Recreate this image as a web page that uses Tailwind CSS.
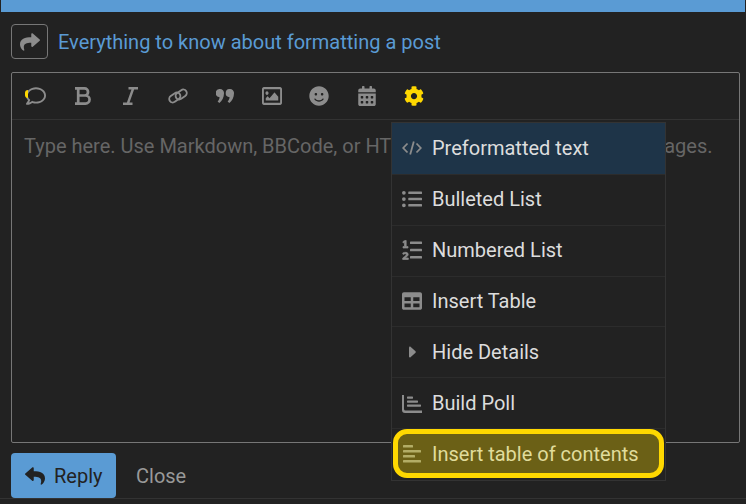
<!DOCTYPE html>
<html lang="en">
<head>
    <meta charset="UTF-8">
    <title>Composer</title>
    <script src="https://cdn.jsdelivr.net/npm/@tailwindcss/browser@4"></script>
</head>
<body class="bg-[#222222] h-[504px] w-[746px] overflow-hidden font-['Roboto',sans-serif] flex flex-col">
    <!-- top bar -->
    <div class="h-3 mx-px bg-[#5a9bd4]"></div>

    <!-- hint row -->
    <div class="flex items-center gap-2.5 pl-[11px] mt-3 h-[35px]">
        <div class="w-[37px] h-[35px] border border-[#777] rounded-[4px] flex items-center justify-center">
            <svg class="w-5 h-5 text-[#8c8c8c]" fill="currentColor" viewBox="0 0 512 512"><path d="M503.691 189.836L327.687 37.851C312.281 24.546 288 35.347 288 56.015v80.053C127.371 137.907 0 170.1 0 322.326c0 61.441 39.581 122.309 83.333 154.132 13.653 9.931 33.111-2.533 28.077-18.631C66.066 312.814 132.917 274.316 288 272.085V360c0 20.7 24.3 31.453 39.687 18.164l176.004-152c11.071-9.562 11.086-26.753 0-36.328z"/></svg>
        </div>
        <span class="text-[20px] leading-none text-[#5a9bd4]">Everything to know about formatting a post</span>
    </div>

    <!-- editor -->
    <div class="relative mt-[13px] ml-[11px] w-[729px] h-[371px] border border-[#777] rounded-[2px] flex flex-col">
        <div class="h-[47px] border-b border-[#333] flex items-center text-[#8c8c8c] shrink-0">
            <div class="w-[47.3px] flex justify-center relative">
                <svg class="w-5 h-5" fill="currentColor" viewBox="0 0 512 512"><path d="M256 32C114.600 32 0 125.100 0 240c0 47.600 19.900 91.200 52.900 126.300C38 405.700 7 439.100 6.500 439.500c-6.600 7-8.400 17.200-4.600 26S14.400 480 24 480c61.500 0 110-25.700 139.100-46.300C192 442.800 223.200 448 256 448c141.400 0 256-93.100 256-208S397.400 32 256 32zm0 368c-26.700 0-53.100-4.100-78.400-12.100l-22.700-7.200-19.500 13.800c-14.300 10.100-33.900 21.400-57.500 29 7.300-12.100 14.400-25.700 19.900-40.200l10.600-28.100-20.600-21.800C69.700 314.100 48 282.200 48 240c0-88.200 93.300-160 208-160s208 71.800 208 160-93.300 160-208 160z"/></svg>
                <span class="absolute left-[13px] top-[4px] w-[3px] h-[8px] rounded-l-full bg-[#ffd800]"></span>
            </div>
            <div class="w-[47.3px] flex justify-center">
                <svg class="w-[16px] h-[18px]" fill="none" stroke="currentColor" stroke-width="2.700" viewBox="0 0 16 18">
                    <path d="M0 1.400h9.500a3.500 3.500 0 0 1 0 7.100H3.200M3.200 8.500h7.300a4 4 0 0 1 0 8.100H0M3.200 1.400v15.200"/>
                </svg>
            </div>
            <div class="w-[47.3px] flex justify-center">
                <svg class="w-[15px] h-[18px]" fill="none" stroke="currentColor" stroke-width="2.500" viewBox="0 0 15 18">
                    <path d="M5.500 1.300H15M0 16.700h9.500M10.200 1.300L4.800 16.700"/>
                </svg>
            </div>
            <div class="w-[47.3px] flex justify-center">
                <svg class="w-5 h-5" fill="none" stroke="currentColor" stroke-width="1.900" viewBox="0 0 20 20">
                    <rect x="0.800" y="8" width="12" height="7" rx="3.500" transform="rotate(-35 6.800 11.500)"/>
                    <rect x="7.200" y="5" width="12" height="7" rx="3.500" transform="rotate(-35 13.200 8.500)"/>
                </svg>
            </div>
            <div class="w-[47.3px] flex justify-center">
                <svg class="w-[18px] h-[14px]" fill="currentColor" viewBox="0 0 18 14">
                    <path d="M4 0a4 4 0 0 1 4 4.200c0 4.300-2 8-4.700 9.800L1.600 12.600c1-1 1.700-2.300 2-4.400A4.100 4.100 0 0 1 4 0z"/>
                    <path d="M14 0a4 4 0 0 1 4 4.200c0 4.300-2 8-4.700 9.800l-1.700-1.400c1-1 1.700-2.300 2-4.400A4.100 4.100 0 0 1 14 0z"/>
                </svg>
            </div>
            <div class="w-[47.3px] flex justify-center">
                <svg class="w-5 h-[18px]" preserveAspectRatio="none" fill="currentColor" viewBox="0 64 512 384"><path d="M464 64H48C21.490 64 0 85.490 0 112v288c0 26.510 21.490 48 48 48h416c26.510 0 48-21.490 48-48V112c0-26.510-21.490-48-48-48zm-6 336H54a6 6 0 0 1-6-6V118a6 6 0 0 1 6-6h404a6 6 0 0 1 6 6v276a6 6 0 0 1-6 6zM128 152c-22.091 0-40 17.909-40 40s17.909 40 40 40 40-17.909 40-40-17.909-40-40-40zM96 352h320v-80l-87.515-87.515c-4.686-4.686-12.284-4.686-16.971 0L192 304l-39.515-39.515c-4.686-4.686-12.284-4.686-16.971 0L96 304v48z"/></svg>
            </div>
            <div class="w-[47.3px] flex justify-center">
                <svg class="w-5 h-5" fill="currentColor" viewBox="0 0 496 512"><path d="M248 8C111 8 0 119 0 256s111 248 248 248 248-111 248-248S385 8 248 8zm80 168c17.700 0 32 14.300 32 32s-14.300 32-32 32-32-14.300-32-32 14.300-32 32-32zm-160 0c17.700 0 32 14.300 32 32s-14.300 32-32 32-32-14.300-32-32 14.300-32 32-32zm194.800 170.200C334.300 380.400 292.500 400 248 400s-86.300-19.600-114.800-53.800c-13.600-16.300 11-36.700 24.600-20.500 22.400 26.900 55.200 42.200 90.200 42.200s67.800-15.400 90.200-42.200c13.400-16.200 38.100 4.200 24.600 20.500z"/></svg>
            </div>
            <div class="w-[47.3px] flex justify-center">
                <svg class="w-[18px] h-5" fill="currentColor" viewBox="0 0 448 512"><path d="M0 464c0 26.500 21.500 48 48 48h352c26.500 0 48-21.500 48-48V192H0v272zm320-196c0-6.600 5.400-12 12-12h40c6.600 0 12 5.400 12 12v40c0 6.600-5.400 12-12 12h-40c-6.600 0-12-5.400-12-12v-40zm0 128c0-6.600 5.400-12 12-12h40c6.600 0 12 5.400 12 12v40c0 6.600-5.400 12-12 12h-40c-6.600 0-12-5.400-12-12v-40zM192 268c0-6.600 5.400-12 12-12h40c6.600 0 12 5.400 12 12v40c0 6.600-5.400 12-12 12h-40c-6.600 0-12-5.400-12-12v-40zm0 128c0-6.600 5.400-12 12-12h40c6.600 0 12 5.400 12 12v40c0 6.600-5.400 12-12 12h-40c-6.600 0-12-5.400-12-12v-40zM64 268c0-6.600 5.400-12 12-12h40c6.600 0 12 5.400 12 12v40c0 6.600-5.400 12-12 12H76c-6.600 0-12-5.400-12-12v-40zm0 128c0-6.600 5.400-12 12-12h40c6.600 0 12 5.400 12 12v40c0 6.600-5.400 12-12 12H76c-6.600 0-12-5.400-12-12v-40zM400 64h-48V16c0-8.800-7.200-16-16-16h-32c-8.800 0-16 7.200-16 16v48H160V16c0-8.800-7.200-16-16-16h-32c-8.800 0-16 7.200-16 16v48H48C21.500 64 0 85.500 0 112v48h448v-48c0-26.500-21.500-48-48-48z"/></svg>
            </div>
            <div class="w-[47.3px] flex justify-center text-[#ffd800]">
                <svg class="w-5 h-5" fill="currentColor" viewBox="0 0 512 512"><path d="M487.4 315.700l-42.600-24.600c4.300-23.200 4.300-47 0-70.200l42.600-24.600c4.900-2.800 7.100-8.600 5.500-14-11.100-35.600-30-67.800-54.700-94.600-3.800-4.100-10-5.100-14.800-2.300L380.800 110c-17.900-15.400-38.500-27.300-60.800-35.100V25.800c0-5.600-3.900-10.500-9.400-11.700-36.700-8.200-74.300-7.800-109.200 0-5.500 1.200-9.400 6.100-9.400 11.700V75c-22.200 7.900-42.800 19.800-60.800 35.100L88.700 85.500c-4.900-2.800-11-1.900-14.800 2.300-24.700 26.700-43.600 58.900-54.700 94.600-1.700 5.400.6 11.200 5.500 14L67.300 221c-4.300 23.200-4.300 47 0 70.200l-42.600 24.600c-4.900 2.800-7.100 8.600-5.500 14 11.100 35.600 30 67.800 54.700 94.600 3.800 4.100 10 5.100 14.800 2.300l42.600-24.600c17.900 15.400 38.500 27.300 60.800 35.100v49.200c0 5.600 3.900 10.500 9.400 11.700 36.700 8.200 74.300 7.800 109.200 0 5.500-1.200 9.400-6.100 9.400-11.700v-49.200c22.200-7.900 42.800-19.800 60.800-35.100l42.600 24.600c4.900 2.800 11 1.900 14.800-2.300 24.700-26.700 43.600-58.900 54.700-94.600 1.500-5.500-.7-11.300-5.600-14.100zM256 336c-44.100 0-80-35.900-80-80s35.900-80 80-80 80 35.900 80 80-35.900 80-80 80z"/></svg>
            </div>
        </div>
        <div class="pl-[12px] pt-[14px] text-[20px] leading-[24px] text-[#666] whitespace-nowrap">Type here. Use Markdown, BBCode, or HTML to format. Drag or paste images.</div>

        <!-- toolbar popup menu -->
        <div class="absolute left-[379px] top-[49px] w-[275px] h-[359px] bg-[#222222] border border-[#333] flex flex-col text-[20px] leading-6 text-[#dddddd]">
            <div class="h-[51px] flex items-center gap-[10px] pl-[10px] bg-[#1e3448]">
                <svg class="w-5 h-5 text-[#8c8c8c]" fill="none" stroke="currentColor" stroke-width="1.800" viewBox="0 0 20 20"><path d="M5.500 5.500L1.200 10l4.300 4.500M14.500 5.500l4.300 4.500-4.300 4.500M11.800 3.500L8.200 16.500"/></svg>
                <span>Preformatted text</span>
            </div>
            <div class="h-[51px] flex items-center gap-[10px] pl-[10px] pb-px border-t border-[#2c2c2c]">
                <svg class="w-5 h-5 text-[#8c8c8c]" fill="currentColor" viewBox="0 0 512 512"><path d="M48 48a48 48 0 1 0 48 48 48 48 0 0 0-48-48zm0 160a48 48 0 1 0 48 48 48 48 0 0 0-48-48zm0 160a48 48 0 1 0 48 48 48 48 0 0 0-48-48zm448 16H176a16 16 0 0 0-16 16v32a16 16 0 0 0 16 16h320a16 16 0 0 0 16-16v-32a16 16 0 0 0-16-16zm0-320H176a16 16 0 0 0-16 16v32a16 16 0 0 0 16 16h320a16 16 0 0 0 16-16V80a16 16 0 0 0-16-16zm0 160H176a16 16 0 0 0-16 16v32a16 16 0 0 0 16 16h320a16 16 0 0 0 16-16v-32a16 16 0 0 0-16-16z"/></svg>
                <span>Bulleted List</span>
            </div>
            <div class="h-[51px] flex items-center gap-[10px] pl-[10px] pb-px border-t border-[#2c2c2c]">
                <svg class="w-5 h-5 text-[#8c8c8c]" fill="currentColor" viewBox="0 0 20 20">
                    <path stroke="currentColor" stroke-width=".7" d="M1 1.500L3 .500h1.200v6H6V8H1V6.500h1.500V2.300L1 3zM.7 19.500v-1.400c2.300-2 3.600-2.800 3.600-3.700 0-1-1.900-.8-3.200 0L.7 13c2-1.100 5.500-1.100 5.500 1.300 0 1.400-1.300 2.400-3 3.700h3.100v1.500z"/>
                    <rect x="8" y="1.400" width="12" height="2.600" rx=".6"/><rect x="8" y="8.700" width="12" height="2.600" rx=".6"/><rect x="8" y="16" width="12" height="2.600" rx=".6"/>
                </svg>
                <span>Numbered List</span>
            </div>
            <div class="h-[51px] flex items-center gap-[10px] pl-[10px] pb-px border-t border-[#2c2c2c]">
                <svg class="w-5 h-5 text-[#8c8c8c]" fill="currentColor" viewBox="0 0 512 512"><path d="M464 32H48C21.490 32 0 53.490 0 80v352c0 26.510 21.490 48 48 48h416c26.510 0 48-21.490 48-48V80c0-26.510-21.490-48-48-48zM224 416H64v-96h160v96zm0-160H64v-96h160v96zm224 160H288v-96h160v96zm0-160H288v-96h160v96z"/></svg>
                <span>Insert Table</span>
            </div>
            <div class="h-[51px] flex items-center gap-[10px] pl-[10px] pb-px border-t border-[#2c2c2c]">
                <svg class="w-5 h-5 text-[#8c8c8c]" fill="currentColor" viewBox="0 0 20 20"><path d="M7 5.500c0-.8.900-1.200 1.500-.7l5 4.500c.4.400.4 1 0 1.400l-5 4.500c-.6.500-1.500.1-1.500-.7z"/></svg>
                <span>Hide Details</span>
            </div>
            <div class="h-[51px] flex items-center gap-[10px] pl-[10px] pb-px border-t border-[#2c2c2c]">
                <svg class="w-5 h-5 text-[#8c8c8c]" fill="currentColor" viewBox="0 0 20 20"><path d="M0 2h2v14a1.500 1.500 0 0 0 1.500 1.500H20V20H3a3 3 0 0 1-3-3z"/><rect x="5" y="3.500" width="6" height="2.200" rx=".6"/><rect x="5" y="7.500" width="11" height="2.200" rx=".6"/><rect x="5" y="11.500" width="14" height="2.200" rx=".6"/></svg>
                <span>Build Poll</span>
            </div>
            <div class="h-[52px] p-px border-t border-[#2c2c2c]">
                <div class="h-[49px] -mt-[1px] flex items-center gap-[11px] pl-[5px] rounded-[14px] border-[5px] border-[#ffd800] bg-[#6b6016] text-[#e0dc9c]">
                    <svg class="w-[18px] h-5 text-[#b3ad66]" fill="currentColor" viewBox="0 0 18 20"><rect x="0" y="1" width="10" height="2.400" rx=".5"/><rect x="0" y="6" width="18" height="2.400" rx=".5"/><rect x="0" y="11" width="12" height="2.400" rx=".5"/><rect x="0" y="16" width="18" height="2.400" rx=".5"/></svg>
                    <span>Insert table of contents</span>
                </div>
            </div>
        </div>
    </div>

    <!-- actions -->
    <div class="flex items-center pl-[11px] mt-[10px] border-b border-[#333] h-[46px] shrink-0">
        <button class="h-[45px] w-[105px] bg-[#5a9bd4] rounded-[4px] flex items-center gap-[9px] pl-[14px] text-[20px] text-[#222222]">
            <svg class="w-5 h-5" fill="currentColor" viewBox="0 0 512 512"><path d="M8.309 189.836L184.313 37.851C199.719 24.546 224 35.347 224 56.015v80.053c160.629 1.839 288 34.032 288 186.258 0 61.441-39.581 122.309-83.333 154.132-13.653 9.931-33.111-2.533-28.077-18.631 45.344-145.014-21.507-183.512-176.590-185.743V360c0 20.700-24.300 31.453-39.687 18.164l-176.004-152c-11.071-9.562-11.086-26.753 0-36.328z"/></svg>
            <span>Reply</span>
        </button>
        <span class="ml-[20px] text-[20px] text-[#999]">Close</span>
    </div>
</body>
</html>
